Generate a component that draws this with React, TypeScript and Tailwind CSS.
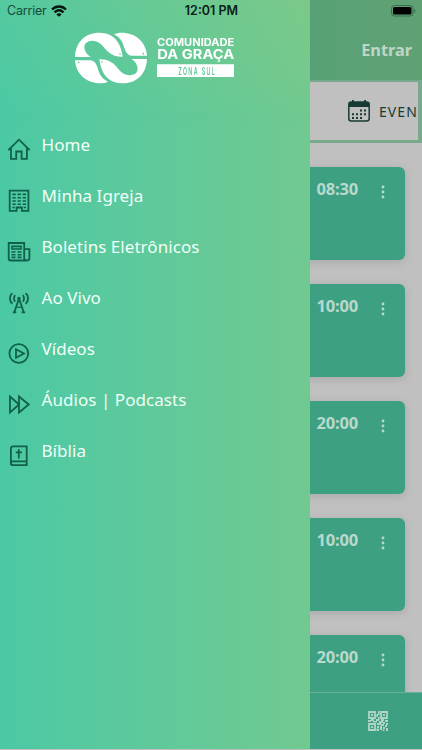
import type { ReactNode } from "react";

const Icon = ({ children }: { children: ReactNode }) => (
  <svg
    viewBox="0 0 24 24"
    className="w-6 h-6 shrink-0 text-[#0f614a]"
    fill="none"
    stroke="currentColor"
    strokeWidth="1.8"
  >
    {children}
  </svg>
);

const menuItems = [
  {
    label: "Home",
    icon: (
      <Icon>
        <path d="M1.3 12.2 12 1.7 22.7 12.2M4 10.2v10.7h5.2v-7.4h5.4v7.4h5.3V10.2" />
      </Icon>
    ),
  },
  {
    label: "Minha Igreja",
    icon: (
      <Icon>
        <path d="M2.7 1.6h18.7v20.2h-6.5v-3.3H9.6v3.3H2.7z" />
        <path strokeWidth="1.6" d="M5.4 5.4h3.4m1.7 0h3.4m1.7 0H19M5.4 8.7h3.4m1.7 0h3.4m1.7 0H19M5.4 12h3.4m1.7 0h3.4m1.7 0H19M5.4 15.3h3.4m1.7 0h3.4m1.7 0H19M5.4 18.5h2.4m8.8 0H19" />
      </Icon>
    ),
  },
  {
    label: "Boletins Eletrônicos",
    icon: (
      <Icon>
        <path d="M20 20.5H4a2.3 2.3 0 0 1-2.3-2.3V3h15.5v15.2c0 3 5.2 3 5.2 0V9.1h-5" />
        <path strokeWidth="1.6" d="M5 6.4h9v2.6H5zM4.5 12h4m2 0h4M4.5 14.7h4m2 0h4M4.5 17.4h4m2 0h4" />
      </Icon>
    ),
  },
  {
    label: "Ao Vivo",
    icon: (
      <Icon>
        <path d="m12 7.5-4.700 13.700m4.700-13.700 4.700 13.700M5.800 21.300h3.500m5.400 0h3.500M8.200 10.700c-1.600-1.500-1.600-5 0-6.500M15.800 10.700c1.600-1.500 1.600-5 0-6.500M5.400 12.700c-3.300-2.600-3.300-8 0-10.400M18.600 12.700c3.300-2.600 3.300-8 0-10.400" />
        <path d="M9.200 16.200h5.600" strokeWidth="1.200" />
        <circle cx="12" cy="7.5" r="1.7" fill="currentColor" stroke="none" />
      </Icon>
    ),
  },
  {
    label: "Vídeos",
    icon: (
      <Icon>
        <circle cx="11.8" cy="11.5" r="9.4" />
        <path d="M9 7.2v8.6l8-4.3z" />
      </Icon>
    ),
  },
  {
    label: "Áudios | Podcasts",
    icon: (
      <Icon>
        <path d="M3 3.5v16l9-8zM12 3.5v16l9.7-8z" />
      </Icon>
    ),
  },
  {
    label: "Bíblia",
    icon: (
      <Icon>
        <path d="M19.7 21.2H6.2a2.3 2.3 0 0 1-2.3-2.3V4.600a2.3 2.3 0 0 1 2.3-2.3h13.5zM3.9 19.400c0-1.200.7-2 2-2h13.8M11.8 5.200v9.300M8.700 8.400H15" />
      </Icon>
    ),
  },
];

const events = ["08:30", "10:00", "20:00", "10:00", "20:00"];

const FishPair = () => (
  <>
    <path
      fill="#fff"
      d="M45 111C47 66 75 38 119 38C158 38 182 62 188 110C158 111 144 97 131 81C119 66 105 60 91 63c-18 3-21 17-15 31 4 8 9 13 16 17Z"
    />
    <path fill="#fff" d="M162 43c7-3 15-5 22-5 44 0 74 28 77 69h-46C203 106 197 97 193 84C189 70 184 54 162 43Z" />
    <circle cx="180" cy="102" r="2.5" fill="#60c99b" />
    <circle cx="250" cy="101" r="2.5" fill="#60c99b" />
  </>
);

const Logo = () => (
  <svg viewBox="0 0 570 225" className="w-[190px] h-[75px]">
    <FishPair />
    <g transform="rotate(180 153 114)">
      <FishPair />
    </g>
    <g fill="#fff" fontFamily="Inter, sans-serif" fontWeight="700">
      <text x="291" y="77" fontSize="30" textLength="232" lengthAdjust="spacingAndGlyphs">
        COMUNIDADE
      </text>
      <text x="292" y="118" fontSize="39" textLength="231" lengthAdjust="spacingAndGlyphs">
        DA GRAÇA
      </text>
    </g>
    <path fill="#fff" d="M291 133h231v38H291z" />
    <text
      transform="translate(355 164) scale(.48 1)"
      fontFamily="Inter, sans-serif"
      fontWeight="600"
      fontSize="33"
      textLength="227"
      fill="#60c99b"
    >
      ZONA SUL
    </text>
  </svg>
);

const StatusBar = () => (
  <div className="absolute inset-x-0 top-0 z-20 h-[22px] grid grid-cols-3 items-center pl-[7px] pr-[6px] font-[Inter,sans-serif] text-[12.5px] text-[#0b2018]">
    <div className="flex items-center gap-[4px]">
      <span className="text-[#174c37] tracking-[-0.2px]">Carrier</span>
      <svg viewBox="0 0 16 12" className="w-4 h-3" fill="none" stroke="#06150f" strokeWidth="2.3">
        <path d="M1 4.5c4-4 10-4 14 0M3.5 7.4c2.8-2.6 6.2-2.6 9 0" />
        <path d="M8 11.8 5.3 9.4c1.6-1.4 3.8-1.4 5.4 0z" fill="#06150f" stroke="none" />
      </svg>
    </div>
    <span className="text-center font-semibold whitespace-nowrap">12:01 PM</span>
    <svg viewBox="0 0 25 12" className="w-[25px] h-3 justify-self-end">
      <rect x=".5" y=".5" width="21.5" height="10.5" rx="3" fill="none" stroke="#396c4b" />
      <rect x="2" y="2" width="18.5" height="7.5" rx="1.6" fill="#000" />
      <path d="M23.2 4v4c1.6-.7 1.6-3.3 0-4" fill="#396c4b" />
    </svg>
  </div>
);

const QrIcon = () => (
  <svg viewBox="0 0 20 20" className="w-5 h-5 text-[#b2d4c6]" fill="none" stroke="currentColor" strokeWidth="1.8">
    <path d="M1 1h6v6H1zM13 1h6v6h-6zM1 13h6v6H1z" />
    <path
      fill="currentColor"
      stroke="none"
      d="M3 3h2v2H3zM15 3h2v2h-2zM3 15h2v2H3zM10 0h1.6v4H10zM8.4 3H10v3H8.4zM10 6h1.6v3H10zM0 9h3v2H0zM3 8h3v2H3zM5 10h4v1.6H5zM8 8h3v2H8zM11 10h4v2h-4zM13 8h3v2h-3zM17 9h3v2h-3zM15 11h2v2h-2zM18 12h2v2h-2zM9 12h4v2H9zM13 13h3v2h-3zM9 15h2v2H9zM12 15h2v4h-2zM8.5 17.5H11V20H8.5zM15 16h2v2h-2zM17 14h2v2h-2zM18 17h2v3h-2zM14.5 18.5h2V20h-2z"
    />
  </svg>
);

const EventCard = ({ time }: { time: string }) => (
  <div className="flex h-[93px] shrink-0 justify-end rounded-md bg-[#3da083] pt-[10px] pr-[20px] shadow-[0_2px_10px_rgba(0,0,0,0.13)]">
    <span className="text-[16.5px] tracking-[-0.2px] leading-6 font-bold text-[#b9d9cd]">{time}</span>
    <svg viewBox="0 0 4 14" className="ml-[23px] mt-[8px] w-1 h-[14px]" fill="#b9d9cd">
      <circle cx="2" cy="2" r="1.4" />
      <circle cx="2" cy="7" r="1.4" />
      <circle cx="2" cy="12" r="1.4" />
    </svg>
  </div>
);

const App = () => {
  return (
    <div className="relative h-[750px] w-[422px] overflow-hidden bg-[#c0c0c0] font-['Noto_Sans',sans-serif]">
      <StatusBar />

      <div className="flex h-full flex-col">
        <header className="flex h-20 shrink-0 items-center justify-end bg-linear-to-r from-[#3da083] to-[#60a173] pt-[20px] pr-[10px]">
          <span className="text-[16.3px] font-bold text-[#bfd6c6]">Entrar</span>
        </header>

        <nav className="h-[63px] shrink-0 bg-[#79a98d] pt-[2px] pr-[4px] pb-[3px]">
          <div className="flex h-full items-center justify-end gap-[9px] bg-[#c0c0c0] pr-px text-[#173b32]">
            <svg viewBox="0 0 22 22" className="w-[22px] h-[22px]" fill="none" stroke="currentColor">
              <rect x=".8" y="2" width="20.4" height="19" rx="2.5" strokeWidth="1.5" />
              <path fill="currentColor" stroke="none" d="M1 7V4c0-1.2.8-2 2-2h16c1.2 0 2 .8 2 2v3zM4 0h1.8v3H4zM16.2 0H18v3h-1.8z" />
              <path strokeWidth="2" strokeDasharray="2 2" d="M12 10.5h7M4 14.3h15M4 18h11" />
            </svg>
            <span className="text-[14px] tracking-[1.1px] mr-[-1px]">EVEN</span>
          </div>
        </nav>

        <main className="flex min-h-0 flex-1 flex-col gap-6 overflow-hidden pl-[17px] pr-[17px] pt-6">
          {events.map((time, i) => (
            <EventCard key={i} time={time} />
          ))}
        </main>

        <footer className="mb-px flex h-[57px] shrink-0 items-center justify-end border-t border-[#6eb19b] bg-[#3da083] pr-[34px]">
          <QrIcon />
        </footer>
      </div>

      {/* side menu */}
      <aside className="absolute left-0 top-0 z-10 flex h-[749px] w-[310px] flex-col bg-linear-to-r from-[#4bc9a5] to-[#70c990]">
        <div className="flex h-[124px] shrink-0 items-start justify-center bg-linear-[60deg] from-[#4bc9a5] to-[#7bc989] pt-5 [mask-image:linear-gradient(#000_70%,transparent)]">
          <Logo />
        </div>
        <ul className="flex flex-col">
          {menuItems.map((item) => (
            <li key={item.label} className="flex h-[51px] items-center gap-[10.5px] pl-[7px]">
              {item.icon}
              <span className="pb-[10px] text-[17px] leading-6 tracking-[0.05px] text-[#f0fff7]">
                {item.label}
              </span>
            </li>
          ))}
        </ul>
      </aside>
    </div>
  );
};

export default App;
